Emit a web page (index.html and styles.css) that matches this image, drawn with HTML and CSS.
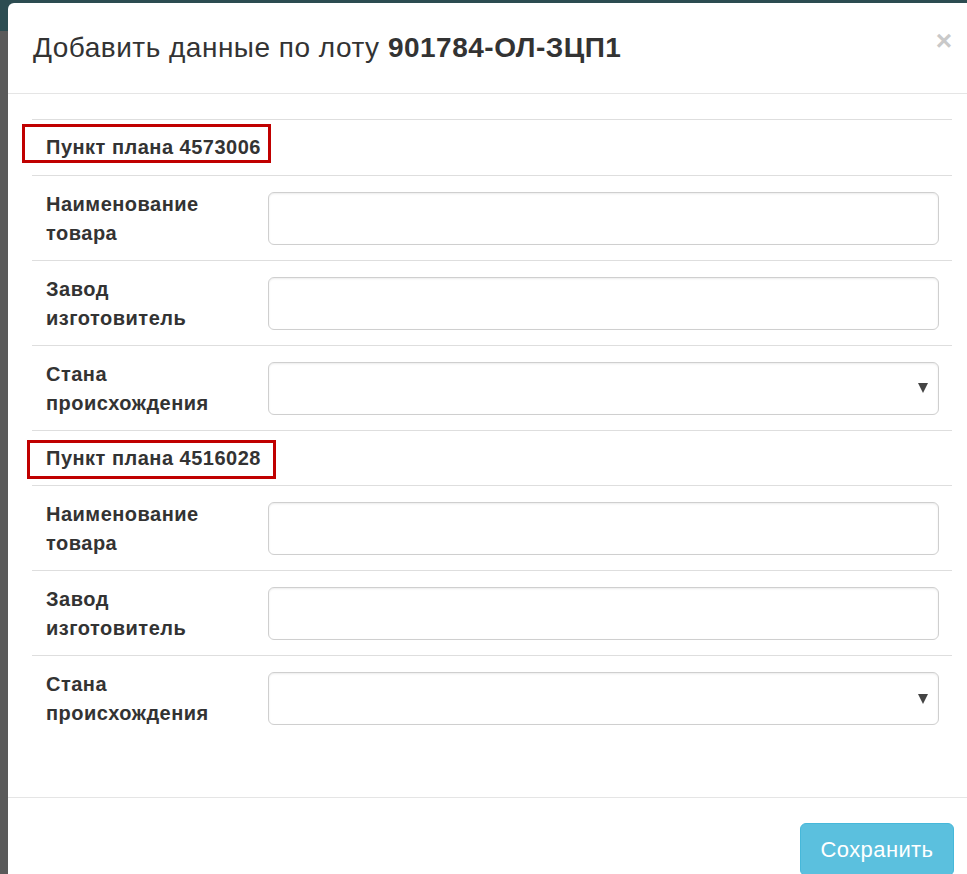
FILE: index.html
```html
<!DOCTYPE html>
<html lang="ru">
<head>
<meta charset="utf-8">
<title>Добавить данные по лоту</title>
<link rel="stylesheet" href="styles.css">
</head>
<body>
<div class="page">
  <div class="modal">
    <div class="modal-header">
      <h4 class="modal-title">Добавить данные по лоту <b>901784-ОЛ-ЗЦП1</b></h4>
      <span class="close">×</span>
    </div>
    <div class="modal-body">
      <div class="table">
        <div class="section-row">
          <span class="section-title">Пункт плана 4573006</span>
          <span class="mark mark-1"></span>
        </div>
        <div class="field-row">
          <div class="label">Наименование<br>товара</div>
          <div class="control"><div class="input"></div></div>
        </div>
        <div class="field-row">
          <div class="label">Завод<br>изготовитель</div>
          <div class="control"><div class="input"></div></div>
        </div>
        <div class="field-row">
          <div class="label">Стана<br>происхождения</div>
          <div class="control"><div class="input select"><span class="caret"></span></div></div>
        </div>
        <div class="section-row">
          <span class="section-title">Пункт плана 4516028</span>
          <span class="mark mark-2"></span>
        </div>
        <div class="field-row">
          <div class="label">Наименование<br>товара</div>
          <div class="control"><div class="input"></div></div>
        </div>
        <div class="field-row">
          <div class="label">Завод<br>изготовитель</div>
          <div class="control"><div class="input"></div></div>
        </div>
        <div class="field-row last">
          <div class="label">Стана<br>происхождения</div>
          <div class="control"><div class="input select"><span class="caret"></span></div></div>
        </div>
      </div>
    </div>
    <div class="modal-footer">
      <button class="btn">Сохранить</button>
    </div>
  </div>
</div>
</body>
</html>
```
FILE: styles.css
```css
html, body {
  margin: 0;
  padding: 0;
  overflow: hidden;
}
body {
  font-family: "Liberation Sans", Arial, sans-serif;
  color: #333;
}
.page {
  width: 967px;
  height: 874px;
  background: linear-gradient(#2c4c51 0, #2c4c51 31px, #5a5a5a 31px, #5a5a5a 100%);
  overflow: hidden;
  padding-top: 3px;
  padding-left: 8px;
  box-sizing: border-box;
}
.modal {
  width: 968px;
  height: 900px;
  background: #fff;
  border-radius: 6px 0 0 0;
}
.modal-header {
  height: 91px;
  box-sizing: border-box;
  border-bottom: 1px solid #e5e5e5;
  padding: 0 24px 0 25px;
  display: flex;
  align-items: center;
  justify-content: space-between;
}
.modal-title {
  margin: 0;
  font-size: 28px;
  letter-spacing: 0.5px;
  font-weight: normal;
  line-height: 1.2;
  color: #333;
  padding-bottom: 1px;
}
.modal-title b {
  font-weight: bold;
}
.close {
  font-size: 28px;
  font-weight: bold;
  color: #c9c9c9;
  line-height: 1;
  margin-top: -14px;
}
.modal-body {
  height: 704px;
  box-sizing: border-box;
  padding: 25px 24px 0 24px;
  border-bottom: 1px solid #e5e5e5;
}
.table {
  border-top: 1px solid #dedede;
}
.section-row {
  position: relative;
  height: 56px;
  box-sizing: border-box;
  display: flex;
  align-items: center;
  padding-left: 14px;
  border-bottom: 1px solid #dedede;
}
.section-title {
  font-weight: bold;
  font-size: 20px;
  letter-spacing: 0.5px;
}
.mark {
  position: absolute;
  border: 3px solid #c00000;
  box-sizing: border-box;
  width: 249px;
  height: 39px;
}
.mark-1 {
  left: -10px;
  top: 4px;
}
.mark-2 {
  left: -5px;
  top: 9px;
}
.field-row {
  height: 85px;
  box-sizing: border-box;
  display: grid;
  grid-template-columns: 236px 1fr;
  align-items: center;
  padding-right: 13px;
  border-bottom: 1px solid #dedede;
}
.field-row.last {
  border-bottom: none;
}
.field-row + .section-row {
  height: 55px;
}
.label {
  padding-left: 14px;
  font-weight: bold;
  font-size: 20px;
  letter-spacing: 0.5px;
  line-height: 29px;
  margin-top: 1px;
}
.input {
  height: 53px;
  box-sizing: border-box;
  border: 1px solid #cfcfcf;
  border-radius: 6px;
  box-shadow: inset 0 1px 2px rgba(0,0,0,0.08);
  background: #fff;
}
.select {
  display: flex;
  align-items: center;
  justify-content: flex-end;
  padding-right: 10px;
}
.caret {
  width: 0;
  height: 0;
  border-left: 5px solid transparent;
  border-right: 5px solid transparent;
  border-top: 10px solid #444;
}
.modal-footer {
  padding: 25px 22px 0 0;
  display: flex;
  justify-content: flex-end;
}
.btn {
  width: 154px;
  height: 53px;
  background: #5bc0de;
  border: 1px solid #46b8da;
  border-radius: 6px;
  color: #fff;
  font-family: "Liberation Sans", Arial, sans-serif;
  font-size: 22px;
  letter-spacing: 0.4px;
  padding: 0;
}
```
